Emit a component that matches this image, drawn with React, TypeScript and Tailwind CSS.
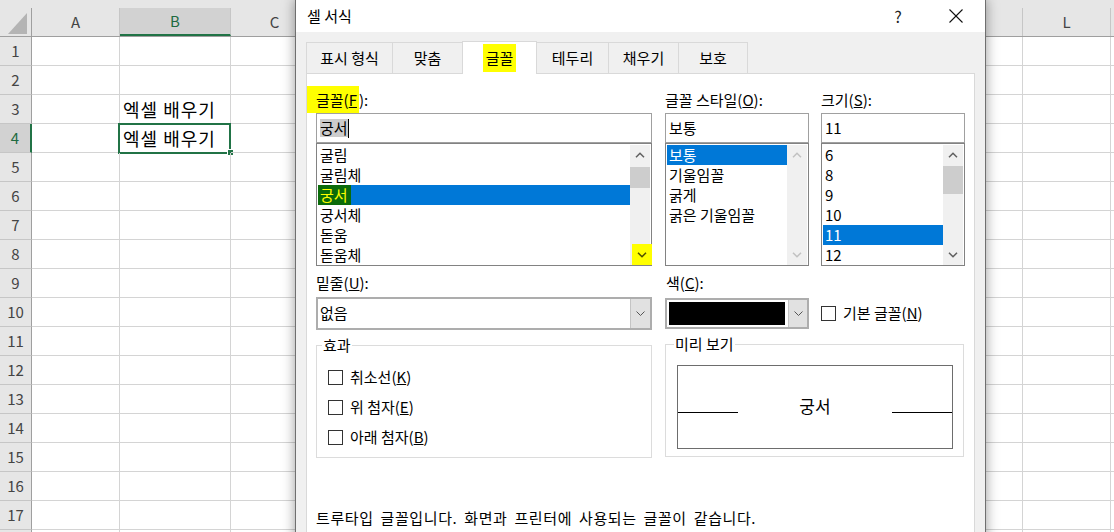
import React from "react";

const COLS: { name: string; w: string; label?: boolean }[] = [
  { name: "A", w: "w-[88px]", label: true },
  { name: "B", w: "w-[111px]", label: true },
  { name: "C", w: "w-[88px]", label: true },
  { name: "D", w: "w-[88px]", label: true },
  { name: "E", w: "w-[88px]", label: true },
  { name: "F", w: "w-[88px]", label: true },
  { name: "G", w: "w-[88px]", label: true },
  { name: "H", w: "w-[88px]", label: true },
  { name: "I", w: "w-[88px]", label: true },
  { name: "J", w: "w-[88px]", label: true },
  { name: "K", w: "w-[88px]", label: true },
  { name: "L", w: "w-[88px]", label: true },
  { name: "M", w: "w-[88px]", label: false },
];

const ROWS = Array.from({ length: 18 }, (_, i) => i + 1);

function Sheet() {
  return (
    <div className="flex flex-col w-[1114px] bg-white">
      <div className="h-[37px] bg-[#e6e6e6] pt-[8px] flex border-b border-[#9f9f9f] shrink-0">
        <div className="w-[32px] shrink-0 border-r border-[#9f9f9f] flex items-end justify-end pr-[4px] pb-[2px]">
          <svg width="19" height="21" viewBox="0 0 19 21">
            <polygon points="19,0 19,21 0,21" fill="#b4b4b4" />
          </svg>
        </div>
        {COLS.map((c) => (
          <div
            key={c.name}
            className={`${c.w} shrink-0 border-r border-[#c6c6c6] flex items-center justify-center text-[15px] ${
              c.name === "B"
                ? "bg-[#d2d2d2] border-b-2 border-b-[#217346] text-[#1e6b41]"
                : "text-[#444444]"
            }`}
          >
            {c.label ? c.name : null}
          </div>
        ))}
      </div>
      {ROWS.map((r) => (
        <div key={r} className="flex h-[29px] shrink-0">
          <div
            className={`w-[32px] shrink-0 border-b border-[#c6c6c6] flex items-center justify-center text-[15px] ${
              r === 4
                ? "bg-[#d2d2d2] border-r-2 border-r-[#217346] text-[#1e6b41]"
                : "bg-[#e6e6e6] border-r border-r-[#9f9f9f] text-[#444444]"
            }`}
          >
            {r < 18 ? r : null}
          </div>
          {COLS.map((c) => (
            <div
              key={c.name}
              className={`${c.w} shrink-0 border-r border-b border-[#d4d4d4] relative flex items-center pl-[3px] text-[18px] tracking-[1px] text-black whitespace-nowrap`}
            >
              {c.name === "B" && (r === 3 || r === 4) ? "엑셀 배우기" : null}
              {c.name === "B" && r === 4 ? (
                <>
                  <div className="absolute -left-[2px] -top-[1px] w-[113px] h-[31px] border-2 border-[#217346]" />
                  <div className="absolute -right-[4px] -bottom-[4px] w-[7px] h-[7px] bg-[#217346] border border-white" />
                </>
              ) : null}
            </div>
          ))}
        </div>
      ))}
    </div>
  );
}

function ChevUp({ color }: { color: string }) {
  return (
    <svg width="10" height="6" viewBox="0 0 10 6">
      <polyline points="1,5.2 5,1.2 9,5.2" fill="none" stroke={color} strokeWidth="1.5" />
    </svg>
  );
}

function ChevDown({ color }: { color: string }) {
  return (
    <svg width="10" height="6" viewBox="0 0 10 6">
      <polyline points="1,0.8 5,4.8 9,0.8" fill="none" stroke={color} strokeWidth="1.5" />
    </svg>
  );
}

function SmallChev() {
  return (
    <svg width="9" height="5" viewBox="0 0 9 5">
      <polyline points="0.5,0.5 4.5,4.5 8.5,0.5" fill="none" stroke="#555555" strokeWidth="1" />
    </svg>
  );
}

function ScrollBar({
  thumb,
  disabled,
  hl,
}: {
  thumb?: string;
  disabled?: boolean;
  hl?: boolean;
}) {
  const c = disabled ? "#c2c2c2" : "#606060";
  return (
    <div className="w-[20px] bg-[#f0f0f0] flex flex-col shrink-0 mt-[1px] mr-[1px]">
      <div className="h-[20px] flex items-center justify-center">
        <ChevUp color={c} />
      </div>
      <div className="flex-1">{thumb ? <div className={thumb} /> : null}</div>
      <div
        className={`flex items-center justify-center ${
          hl ? "bg-[#ffff00] ml-[2px] -mr-[2px] h-[21px]" : "h-[20px]"
        }`}
      >
        <ChevDown color={hl ? "#505000" : c} />
      </div>
    </div>
  );
}

function Item({ text, sel }: { text: React.ReactNode; sel?: boolean }) {
  return (
    <div
      className={`h-[20px] leading-[20px] px-[2px] whitespace-nowrap ${
        sel ? "bg-[#0078d7] text-white" : "text-black"
      }`}
    >
      {text}
    </div>
  );
}

function Checkbox() {
  return <div className="w-[15px] h-[15px] border border-[#333333] bg-white shrink-0" />;
}

function Dialog() {
  const tabs: { label: React.ReactNode; w: string; sel?: boolean }[] = [
    { label: "표시 형식", w: "w-[87px]" },
    { label: "맞춤", w: "w-[71px]" },
    {
      label: <span className="bg-[#ffff00] px-[3px] py-[3px]">글꼴</span>,
      w: "w-[75px]",
      sel: true,
    },
    { label: "테두리", w: "w-[72px]" },
    { label: "채우기", w: "w-[71px]" },
    { label: "보호", w: "w-[70px]" },
  ];
  return (
    <div className="absolute left-[295px] -top-px w-[691px] h-[620px] bg-[#f0f0f0] border border-[#6f6f6f] shadow-[0_0_12px_rgba(0,0,0,0.4)] flex flex-col text-[15px] text-black">
      {/* title bar */}
      <div className="h-[32px] bg-white flex items-center pl-[11px] shrink-0">
        <span className="text-[15px]">셀 서식</span>
        <div className="ml-auto flex items-center pr-[22px] gap-[44px]">
          <span className="w-[14px] text-center text-[16px] text-[#222222]">?</span>
          <svg width="14" height="14" viewBox="0 0 14 14">
            <line x1="0.5" y1="0.5" x2="13.5" y2="13.5" stroke="#111111" strokeWidth="1.1" />
            <line x1="13.5" y1="0.5" x2="0.5" y2="13.5" stroke="#111111" strokeWidth="1.1" />
          </svg>
        </div>
      </div>
      {/* body */}
      <div className="flex-1 flex flex-col pl-[10px] pt-[9px]">
        <div className="h-[33px] flex items-end -mb-px relative z-10 shrink-0">
          {tabs.map((t, i) => (
            <div
              key={i}
              className={`${t.w} shrink-0 flex items-center justify-center ${
                t.sel
                  ? "h-[33px] bg-white border border-[#d9d9d9] border-b-0 -ml-px"
                  : `h-[32px] bg-[#f0f0f0] border border-[#d9d9d9] ${i === 0 ? "" : "-ml-px"} ${
                      i === 3 ? "border-l-0 ml-0" : ""
                    }`
              }`}
            >
              {t.label}
            </div>
          ))}
        </div>
        <div className="w-[669px] flex-1 bg-white border border-[#d9d9d9] pl-[9px] pt-[16px] flex flex-col">
          {/* top lists */}
          <div className="flex">
            <div className="w-[336px] flex flex-col">
              <div className="h-[23px] leading-[20px] whitespace-nowrap">
                <span className="bg-[#ffff00] -ml-[9px] pl-[9px] pr-[2px] py-[3px]">
                  글꼴(<u>F</u>
                </span>
                ):
              </div>
              <div className="h-[30px] border border-[#a0a0a0] bg-white flex items-center pl-[3px]">
                <span className="bg-[#cccccc] leading-[18px]">궁서</span>
                <div className="w-px h-[19px] bg-black" />
              </div>
              <div className="h-[123px] border border-[#828282] bg-white flex">
                <div className="flex-1 pt-[1px] pl-[1px]">
                  <Item text="굴림" />
                  <Item text="굴림체" />
                  <Item
                    sel
                    text={
                      <span className="inline-block leading-[20px] -ml-[2px] pl-[2px] pr-[3px] bg-[#0b6b0b] text-[#ffff00]">
                        궁서
                      </span>
                    }
                  />
                  <Item text="궁서체" />
                  <Item text="돋움" />
                  <Item text="돋움체" />
                </div>
                <ScrollBar thumb="mt-[2px] h-[21px] bg-[#cdcdcd]" hl />
              </div>
            </div>
            <div className="w-[144px] ml-[13px] flex flex-col">
              <div className="h-[23px] leading-[20px] whitespace-nowrap">
                글꼴 스타일(<u>O</u>):
              </div>
              <div className="h-[30px] border border-[#a0a0a0] bg-white flex items-center pl-[3px]">
                보통
              </div>
              <div className="h-[123px] border border-[#828282] bg-white flex">
                <div className="flex-1 pt-[1px] pl-[1px]">
                  <Item text="보통" sel />
                  <Item text="기울임꼴" />
                  <Item text="굵게" />
                  <Item text="굵은 기울임꼴" />
                </div>
                <ScrollBar disabled />
              </div>
            </div>
            <div className="w-[144px] ml-[12px] flex flex-col">
              <div className="h-[23px] leading-[20px] whitespace-nowrap">
                크기(<u>S</u>):
              </div>
              <div className="h-[30px] border border-[#a0a0a0] bg-white flex items-center pl-[3px]">
                11
              </div>
              <div className="h-[123px] border border-[#828282] bg-white flex">
                <div className="flex-1 pt-[1px] pl-[1px]">
                  <Item text="6" />
                  <Item text="8" />
                  <Item text="9" />
                  <Item text="10" />
                  <Item text="11" sel />
                  <Item text="12" />
                </div>
                <ScrollBar thumb="mt-[1px] h-[28px] bg-[#cdcdcd]" />
              </div>
            </div>
          </div>
          {/* second section */}
          <div className="flex mt-[7px]">
            <div className="w-[336px] flex flex-col">
              <div className="h-[24px] leading-[20px]">
                밑줄(<u>U</u>):
              </div>
              <div className="h-[33px] border-2 border-[#adadad] bg-white flex">
                <div className="flex-1 flex items-center pl-[2px]">없음</div>
                <div className="w-[20px] bg-[#e1e1e1] border-l border-[#c4c4c4] flex items-center justify-center">
                  <SmallChev />
                </div>
              </div>
              <fieldset className="mt-[5px] h-[123px] border border-[#dcdcdc] flex flex-col">
                <legend className="ml-[5px] px-[1px] leading-[20px]">효과</legend>
                <div className="pt-[7px] pl-[11px] flex flex-col">
                  <div className="h-[30px] flex items-center gap-[7px]">
                    <Checkbox />
                    <span>
                      취소선(<u>K</u>)
                    </span>
                  </div>
                  <div className="h-[30px] flex items-center gap-[7px]">
                    <Checkbox />
                    <span>
                      위 첨자(<u>E</u>)
                    </span>
                  </div>
                  <div className="h-[30px] flex items-center gap-[7px]">
                    <Checkbox />
                    <span>
                      아래 첨자(<u>B</u>)
                    </span>
                  </div>
                </div>
              </fieldset>
            </div>
            <div className="w-[299px] ml-[13px] flex flex-col">
              <div className="h-[24px] leading-[20px] pl-[1px]">
                색(<u>C</u>):
              </div>
              <div className="flex items-center mt-[1px]">
                <div className="w-[144px] h-[31px] border-2 border-[#adadad] bg-white flex p-[2px]">
                  <div className="flex-1 bg-black" />
                  <div className="w-[19px] ml-[3px] -my-[2px] -mr-[2px] bg-[#e1e1e1] border-l border-[#c4c4c4] flex items-center justify-center">
                    <SmallChev />
                  </div>
                </div>
                <div className="ml-[12px]">
                  <Checkbox />
                </div>
                <span className="ml-[7px] whitespace-nowrap">
                  기본 글꼴(<u>N</u>)
                </span>
              </div>
              <fieldset className="mt-[5px] h-[123px] border border-[#dcdcdc] flex flex-col">
                <legend className="ml-[8px] px-[1px] leading-[20px]">미리 보기</legend>
                <div className="ml-[11px] mt-[11px] w-[276px] h-[84px] border border-[#6d6d6d] pt-[30px]">
                  <div className="flex items-end h-[20px]">
                    <div className="w-[60px] h-px bg-black mb-[3px]" />
                    <div className="flex-1 text-center text-[17px] leading-[20px]">궁서</div>
                    <div className="w-[60px] h-px bg-black mb-[3px]" />
                  </div>
                </div>
              </fieldset>
            </div>
          </div>
          <div className="mt-[50px] leading-[20px] tracking-[0.6px] [word-spacing:3px] whitespace-nowrap">
            트루타입 글꼴입니다. 화면과 프린터에 사용되는 글꼴이 같습니다.
          </div>
        </div>
      </div>
    </div>
  );
}

export default function App() {
  return (
    <div className="relative w-[1114px] h-[532px] overflow-hidden bg-white font-['Noto_Sans_CJK_KR','Noto_Sans',sans-serif]">
      <Sheet />
      <Dialog />
    </div>
  );
}
